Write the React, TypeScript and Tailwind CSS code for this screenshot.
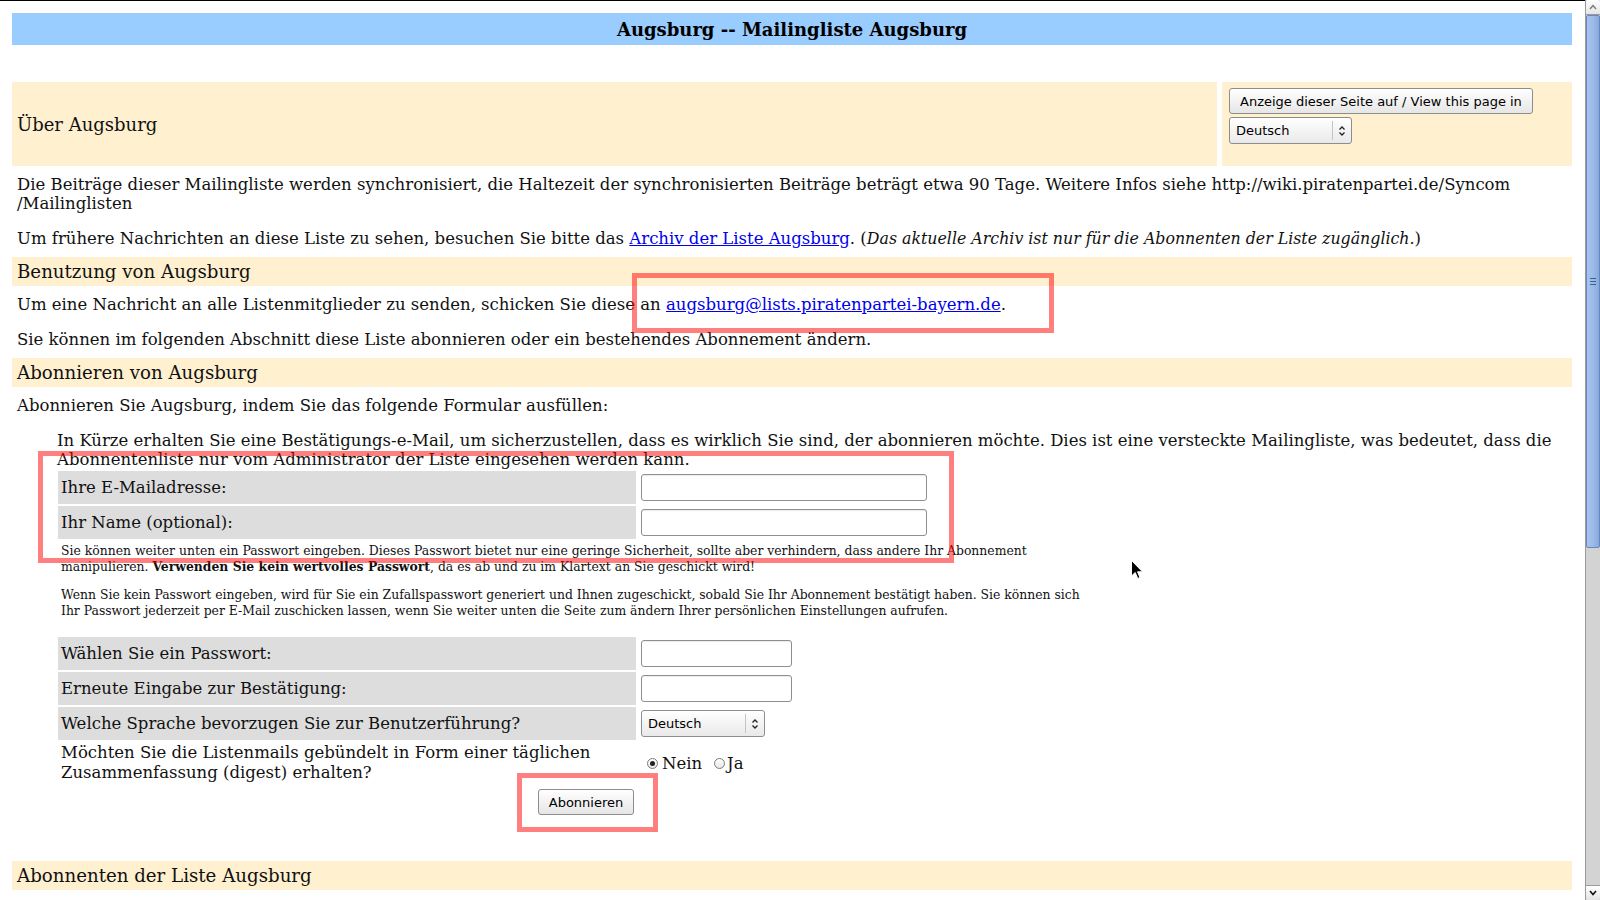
import React from 'react';

const serif = { fontFamily: '"DejaVu Serif", "Liberation Serif", serif' };
const sans = { fontFamily: '"DejaVu Sans", "Liberation Sans", sans-serif' };

function Arrows() {
  return (
    <svg width="8" height="12" viewBox="0 0 8 12" fill="none" stroke="#222" strokeWidth="1.3">
      <path d="M1.5 4.5 L4 2 L6.5 4.5" />
      <path d="M1.5 7.5 L4 10 L6.5 7.5" />
    </svg>
  );
}

function FakeSelect({ wide }: { wide?: boolean }) {
  return (
    <div
      className={
        wide
          ? 'flex h-[27px] w-[124px] items-stretch rounded-[3px] border border-[#8d8d8d] bg-gradient-to-b from-white to-[#e9e9e9] text-[13px] text-black'
          : 'flex h-[27px] w-[123px] items-stretch rounded-[3px] border border-[#8d8d8d] bg-gradient-to-b from-white to-[#e9e9e9] text-[13px] text-black'
      }
      style={sans}
    >
      <div className="flex flex-1 items-center pl-[6px]">Deutsch</div>
      <div className="my-[3px] w-px bg-[#c4c4c4]" />
      <div className="flex w-[18px] items-center justify-center">
        <Arrows />
      </div>
    </div>
  );
}

function TextBox({ short }: { short?: boolean }) {
  return (
    <div
      className={
        short
          ? 'h-[27px] w-[151px] rounded-[3px] border border-[#8f8f8f] bg-white shadow-[inset_0_1px_1px_rgba(0,0,0,0.08)]'
          : 'h-[27px] w-[286px] rounded-[3px] border border-[#8f8f8f] bg-white shadow-[inset_0_1px_1px_rgba(0,0,0,0.08)]'
      }
    />
  );
}

function Radio({ checked }: { checked?: boolean }) {
  return (
    <span className="flex h-[11px] w-[11px] items-center justify-center rounded-full border border-[#7a7a7a] bg-gradient-to-b from-white to-[#e6e6e6]">
      {checked && <span className="h-[5px] w-[5px] rounded-full bg-[#222]" />}
    </span>
  );
}

function FormRow({ label, children }: { label: string; children: React.ReactNode }) {
  return (
    <div className="mt-[2px] flex h-[33px] gap-[5px]">
      <div className="flex w-[578px] items-center bg-[#dddddd] pl-[3px]">{label}</div>
      <div className="flex items-center">{children}</div>
    </div>
  );
}

function Band({ children, className }: { children: React.ReactNode; className: string }) {
  return <div className={className}>{children}</div>;
}

function Scrollbar() {
  return (
    <div className="flex h-full w-[15px] flex-col border-l border-[#9a9a9a] bg-[#d3d3d3]">
      <div className="flex h-[15px] items-center justify-center rounded-t-[2px] border-b border-[#9a9a9a] bg-gradient-to-b from-white to-[#e4e4e4]">
        <svg width="8" height="6" viewBox="0 0 8 6" fill="none" stroke="#777" strokeWidth="1.3">
          <path d="M1 5 L4 1.5 L7 5" />
        </svg>
      </div>
      <div className="flex h-[533px] items-center justify-center rounded-[2px] border border-[#6787bd] bg-gradient-to-r from-[#a7c4ec] via-[#9dbbe8] to-[#86a9dc]">
        <div className="flex flex-col gap-[2px]">
          <div className="h-px w-[6px] bg-[#3f5f94]" />
          <div className="h-px w-[6px] bg-[#3f5f94]" />
          <div className="h-px w-[6px] bg-[#3f5f94]" />
        </div>
      </div>
      <div className="flex-1" />
      <div className="flex h-[15px] items-center justify-center rounded-b-[2px] border-t border-[#9a9a9a] bg-gradient-to-b from-white to-[#e4e4e4]">
        <svg width="8" height="6" viewBox="0 0 8 6" fill="none" stroke="#111" strokeWidth="1.6">
          <path d="M1 1 L4 4.5 L7 1" />
        </svg>
      </div>
    </div>
  );
}

export default function App() {
  return (
    <div className="relative flex h-[900px] w-[1600px] overflow-hidden bg-white text-[16.5px] leading-[19px] text-[#111]" style={serif}>
      <div className="h-full w-[1585px] overflow-hidden border-t border-black pl-[12px] pr-[13px]">
        {/* list title */}
        <div className="mt-[12px] flex h-[32px] items-center justify-center bg-[#99ccff] text-[18px] font-bold text-black">
          Augsburg -- Mailingliste Augsburg
        </div>

        {/* about */}
        <div className="mt-[37px] flex h-[84px] gap-[5px]">
          <div className="flex flex-1 items-center bg-[#fff0d0] pl-[5px] text-[18px]">Über Augsburg</div>
          <div className="w-[350px] bg-[#fff0d0] pl-[7px] pt-[6px]">
            <button
              className="flex h-[26px] items-center rounded-[3px] border border-[#8d8d8d] bg-gradient-to-b from-white to-[#e6e6e6] px-[10px] text-[13px] text-black"
              style={sans}
            >
              Anzeige dieser Seite auf / View this page in
            </button>
            <div className="mt-[3px]">
              <FakeSelect />
            </div>
          </div>
        </div>

        <p className="mt-[9px] pl-[5px]">
          Die Beiträge dieser Mailingliste werden synchronisiert, die Haltezeit der synchronisierten Beiträge beträgt etwa 90 Tage. Weitere Infos siehe http://wiki.piratenpartei.de/Syncom<wbr />/Mailinglisten
        </p>
        <p className="mt-[16px] pl-[5px]">
          Um frühere Nachrichten an diese Liste zu sehen, besuchen Sie bitte das{' '}
          <a className="text-[#0000ee] underline">Archiv der Liste Augsburg</a>. (
          <em className="text-[15.8px]">Das aktuelle Archiv ist nur für die Abonnenten der Liste zugänglich.</em>)
        </p>

        <Band className="mt-[9px] flex h-[29px] items-center bg-[#fff0d0] pl-[5px] text-[18.2px]">Benutzung von Augsburg</Band>

        <p className="mt-[9px] pl-[5px]">
          Um eine Nachricht an alle Listenmitglieder zu senden, schicken Sie diese an{' '}
          <a className="text-[#0000ee] underline">augsburg@lists.piratenpartei-bayern.de</a>.
        </p>
        <p className="mt-[16px] pl-[5px]">
          Sie können im folgenden Abschnitt diese Liste abonnieren oder ein bestehendes Abonnement ändern.
        </p>

        <Band className="mt-[9px] flex h-[29px] items-center bg-[#fff0d0] pl-[5px] text-[18.2px]">Abonnieren von Augsburg</Band>

        <p className="mt-[9px] pl-[5px]">Abonnieren Sie Augsburg, indem Sie das folgende Formular ausfüllen:</p>

        <p className="mt-[16px] pl-[45px]">
          In Kürze erhalten Sie eine Bestätigungs-e-Mail, um sicherzustellen, dass es wirklich Sie sind, der abonnieren möchte. Dies ist eine versteckte Mailingliste, was bedeutet, dass die Abonnentenliste nur vom Administrator der Liste eingesehen werden kann.
        </p>

        {/* subscribe form */}
        <div className="ml-[46px] w-[1056px]">
          <FormRow label="Ihre E-Mailadresse:">
            <TextBox />
          </FormRow>
          <FormRow label="Ihr Name (optional):">
            <TextBox />
          </FormRow>

          <div className="w-[1035px] pl-[3px] text-[12.4px] leading-[16px]">
            <p className="mt-[4px]">
              Sie können weiter unten ein Passwort eingeben. Dieses Passwort bietet nur eine geringe Sicherheit, sollte aber verhindern, dass andere Ihr Abonnement manipulieren. <b>Verwenden Sie kein wertvolles Passwort</b>, da es ab und zu im Klartext an Sie geschickt wird!
            </p>
            <p className="mt-[12px]">
              Wenn Sie kein Passwort eingeben, wird für Sie ein Zufallspasswort generiert und Ihnen zugeschickt, sobald Sie Ihr Abonnement bestätigt haben. Sie können sich Ihr Passwort jederzeit per E-Mail zuschicken lassen, wenn Sie weiter unten die Seite zum ändern Ihrer persönlichen Einstellungen aufrufen.
            </p>
          </div>

          <div className="mt-[18px]">
            <FormRow label="Wählen Sie ein Passwort:">
              <TextBox short />
            </FormRow>
            <FormRow label="Erneute Eingabe zur Bestätigung:">
              <TextBox short />
            </FormRow>
            <FormRow label="Welche Sprache bevorzugen Sie zur Benutzerführung?">
              <FakeSelect wide />
            </FormRow>
          </div>

          <div className="mt-[3px] flex h-[40px] gap-[5px] leading-[20px]">
            <div className="flex w-[578px] items-center pl-[3px]">
              Möchten Sie die Listenmails gebündelt in Form einer täglichen Zusammenfassung (digest) erhalten?
            </div>
            <div className="flex items-center pl-[6px] pt-[1px]">
              <Radio checked />
              <span className="ml-[4px]">Nein</span>
              <span className="ml-[12px]">
                <Radio />
              </span>
              <span className="ml-[2px]">Ja</span>
            </div>
          </div>

          <div className="mt-[6px] flex justify-center">
            <button
              className="flex h-[26px] items-center rounded-[3px] border border-[#8d8d8d] bg-gradient-to-b from-white to-[#e6e6e6] px-[10px] text-[13px] text-black"
              style={sans}
            >
              Abonnieren
            </button>
          </div>
        </div>

        <Band className="mt-[46px] flex h-[29px] items-center bg-[#fff0d0] pl-[5px] text-[18.2px]">Abonnenten der Liste Augsburg</Band>
      </div>

      <Scrollbar />

      {/* red highlight annotations */}
      <div className="pointer-events-none absolute left-[632px] top-[273px] h-[60px] w-[422px] border-[5px] border-[rgba(255,0,0,0.5)]" />
      <div className="pointer-events-none absolute left-[38px] top-[451px] h-[112px] w-[916px] border-[5px] border-[rgba(255,0,0,0.5)]" />
      <div className="pointer-events-none absolute left-[517px] top-[773px] h-[59px] w-[141px] border-[5px] border-[rgba(255,0,0,0.5)]" />

      {/* mouse pointer */}
      <svg className="absolute left-[1131px] top-[560px]" width="13" height="20" viewBox="0 0 13 20">
        <path d="M0.5 0.5 L0.5 16 L4.2 12.5 L6.8 18.5 L9 17.5 L6.5 11.8 L11.5 11.8 Z" fill="#000" stroke="#fff" strokeWidth="1" />
      </svg>
    </div>
  );
}
